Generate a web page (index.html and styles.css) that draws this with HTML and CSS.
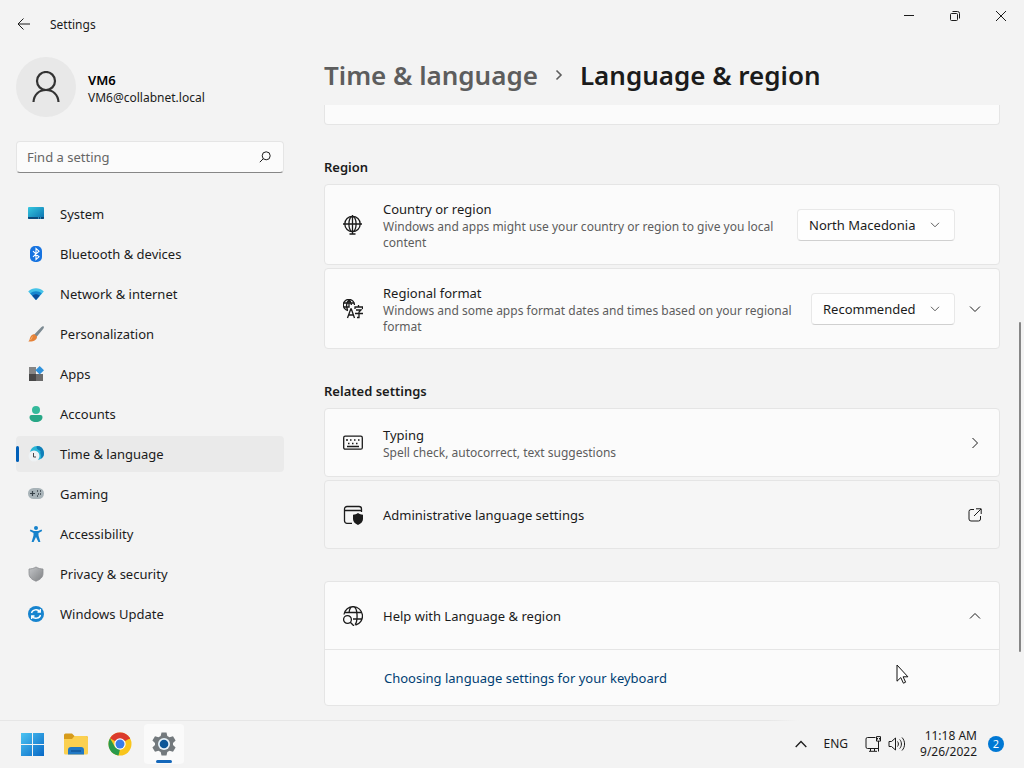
FILE: index.html
```html
<!DOCTYPE html>
<html lang="en">
<head>
    <meta charset="UTF-8">
    <meta name="viewport" content="width=device-width, initial-scale=1.0">
    <title>Settings</title>
    <link rel="stylesheet" href="styles.css">
</head>
<body>
    <div class="window">
        <header class="titlebar">
            <button class="back" aria-label="Back">
                <svg width="14" height="14" viewBox="0 0 14 14"><path d="M13 7H1.5M6.5 1.5L1 7l5.500 5.500" class="line"/></svg>
            </button>
            <span class="app-name">Settings</span>
            <div class="window-buttons">
                <button aria-label="Minimize"><svg width="12" height="12" viewBox="0 0 12 12"><path d="M1 5.500h10" class="line"/></svg></button>
                <button aria-label="Restore"><svg width="12" height="12" viewBox="0 0 12 12"><rect x="1.500" y="3.500" width="7" height="7" rx="1" class="line"/><path d="M3.500 1.500h5a2 2 0 0 1 2 2v5" class="line"/></svg></button>
                <button aria-label="Close"><svg width="12" height="12" viewBox="0 0 12 12"><path d="M1 1l10 10M11 1L1 11" class="line"/></svg></button>
            </div>
        </header>

        <div class="layout">
            <aside class="sidebar">
                <div class="profile">
                    <span class="avatar">
                        <svg width="28" height="32" viewBox="0 0 28 32"><circle cx="14" cy="10" r="9" class="person"/><path d="M1.500 31C2 23.500 7 19 14 19s12 4.500 12.500 12" class="person"/></svg>
                    </span>
                    <div>
                        <div class="user">VM6</div>
                        <div class="mail">VM6@collabnet.local</div>
                    </div>
                </div>
                <label class="search">
                    <input type="text" placeholder="Find a setting" aria-label="Find a setting">
                    <svg width="12" height="12" viewBox="0 0 12 12"><circle cx="7.200" cy="4.800" r="4" class="line"/><path d="M4.300 7.700L.8 11.200" class="line"/></svg>
                </label>
                <nav class="menu">
                    <a href="#">
                        <svg width="16" height="16" viewBox="0 0 16 16">
                            <defs><linearGradient id="screen" x1="0" y1="0" x2="1" y2="1"><stop offset="0" stop-color="#35c8e0"/><stop offset="1" stop-color="#0a6fae"/></linearGradient></defs>
                            <rect y="1" width="16" height="12" rx="1" fill="url(#screen)"/><path d="M0 11h16v1a1 1 0 0 1-1 1H1a1 1 0 0 1-1-1z" fill="#0b4a7c"/><path d="M10 12h1M12 12h1" stroke="#5ccdf0"/>
                        </svg>System</a>
                    <a href="#">
                        <svg width="16" height="16" viewBox="0 0 16 16"><rect x="2" y="0" width="12" height="16" rx="5" fill="#1673e0"/><path d="M5 5.200l6 5.600-3 2.700v-11l3 2.700-6 5.600" fill="none" stroke="#fff" stroke-width="1.100"/></svg>Bluetooth &amp; devices</a>
                    <a href="#">
                        <svg width="16" height="16" viewBox="0 0 16 16"><path d="M8 14L.2 5.500C4.500 1.200 11.500 1.200 15.800 5.500z" fill="#45c3e8"/><path d="M8 14L2.200 7.500c3.200-3.100 8.400-3.100 11.600 0z" fill="#1587cf"/><path d="M8 14L4.300 9.800c2.200-2 5.200-2 7.400 0z" fill="#0b4f9c"/></svg>Network &amp; internet</a>
                    <a href="#">
                        <svg width="16" height="16" viewBox="0 0 16 16"><path d="M15.500.3c1 .8.100 2-.6 3L8.500 11 6 8.700 13 1.500c.8-.8 1.800-1.700 2.500-1.200z" fill="#7c8a92"/><path d="M6.500 8.200L9 10.500c.2 3-2.500 5.300-8.700 5 1.700-1.500 1.200-3 2.200-4.800 1-1.900 2.700-2.500 4-2.500z" fill="#e58238"/><path d="M4.500 10.500l-2 3.500" stroke="#f7b26f"/></svg>Personalization</a>
                    <a href="#">
                        <svg width="16" height="16" viewBox="0 0 16 16"><path d="M1 1h7v7H1z" fill="#858585"/><path d="M1 8h7v7H1z" fill="#484848"/><path d="M8 8h7v7H8z" fill="#6b6b6b"/><path d="M11.700 0L16 4.300l-4.300 4.300-4.300-4.300z" fill="#2f92dc"/></svg>Apps</a>
                    <a href="#">
                        <svg width="16" height="16" viewBox="0 0 16 16"><circle cx="8" cy="4" r="4" fill="#34b99b"/><path d="M3.500 9h9a2 2 0 0 1 2 2c0 3.200-2.800 5-6.500 5s-6.500-1.800-6.500-5a2 2 0 0 1 2-2z" fill="#27a786"/></svg>Accounts</a>
                    <a href="#" class="active" aria-current="page">
                        <svg width="16" height="16" viewBox="0 0 16 16"><circle cx="9" cy="7" r="7" fill="#2ab6d6"/><path d="M9 0a7 7 0 0 1 3.500 13c2-4-1-5 0-7S7 4 9 0z" fill="#117eb8"/><circle cx="6" cy="10" r="5.500" fill="#eef2f4"/><path d="M5.500 7v4H8" fill="none" stroke="#454545"/></svg>Time &amp; language</a>
                    <a href="#">
                        <svg width="16" height="16" viewBox="0 0 16 16"><rect y="2" width="16" height="11" rx="5.500" fill="#a8b3b8"/><path d="M2 7.500h5M4.500 5v5" stroke="#374148" stroke-width="1.200"/><path d="M9 5h1M12 5h1M10 8h1M12 8h1M9 10h1" stroke="#374148" stroke-width="1.300"/></svg>Gaming</a>
                    <a href="#">
                        <svg width="16" height="16" viewBox="0 0 16 16"><circle cx="8" cy="2" r="2" fill="#1682cc"/><path d="M2.500 3.500L6 5h4l3.500-1.500.7 1.600L10.500 7v2.500L12.400 16h-2L8 11l-2.400 5h-2l1.900-6.500V7L1.800 5.100z" fill="#1682cc"/></svg>Accessibility</a>
                    <a href="#">
                        <svg width="16" height="16" viewBox="0 0 16 16">
                            <defs><linearGradient id="shield" x1="0" y1="0" x2="1" y2="1"><stop offset="0" stop-color="#c4c6c8"/><stop offset="1" stop-color="#7e8083"/></linearGradient></defs>
                            <path d="M8 1c2.200 1.300 4.500 2 7 2v4.500c0 3.500-2.500 6-7 7.700-4.500-1.700-7-4.200-7-7.700V3c2.500 0 4.800-.7 7-2z" fill="url(#shield)" stroke="#8b8d90" stroke-width=".8"/>
                        </svg>Privacy &amp; security</a>
                    <a href="#">
                        <svg width="16" height="16" viewBox="0 0 16 16"><circle cx="8" cy="8" r="8" fill="#1784cf"/><path d="M3.500 7C4.200 3.500 9.500 2.500 12 5.700M12.300 3v3H9.500M12.500 9c-.7 3.500-6 4.500-8.500 1.300M3.700 13v-3h2.800" fill="none" stroke="#fff" stroke-width="1.300"/></svg>Windows Update</a>
                </nav>
            </aside>

            <main class="content">
                <h1 class="breadcrumb">
                    <a href="#">Time &amp; language</a>
                    <svg width="8" height="12" viewBox="0 0 8 12"><path d="M1.500 1.500L6 6l-4.500 4.500" class="crumb-arrow"/></svg>
                    <span>Language &amp; region</span>
                </h1>
                <div class="scroll">
                    <div class="card card-cut"></div>

                    <h2>Region</h2>
                    <div class="card row">
                        <svg class="icon" width="20" height="20" viewBox="0 0 20 20"><circle cx="9.500" cy="9" r="7.700" class="bold"/><ellipse cx="9.500" cy="9" rx="3.600" ry="7.700" class="bold"/><path d="M0 9h19M9.500 0v19M6.500 19h6" class="bold"/></svg>
                        <div class="text">
                            <label class="title" for="country">Country or region</label>
                            <div class="hint">Windows and apps might use your country or region to give you local content</div>
                        </div>
                        <span class="dropdown">
                            <select id="country"><option>North Macedonia</option></select>
                            <svg width="10" height="6" viewBox="0 0 10 6"><path d="M1 .8l4 4 4-4" class="line"/></svg>
                        </span>
                        <span class="end"></span>
                    </div>
                    <div class="card row">
                        <svg class="icon" width="20" height="20" viewBox="0 0 20 20"><path d="M5 11.500A5.600 5.600 0 1 1 11.500 6" class="bold"/><path d="M4.500 11C3.200 7.500 3.500 3 6 .6c1.500 1.300 2.200 3 2.400 5.400M.7 4h10.500M.7 8h6M6 .5v8" class="bold"/><path d="M4.500 19L7.800 10h.5l3.200 9M5.500 16h5M12 10V8h7.500v2M15.500 6v2M13 11h5l-2 2v5.500h-2M12 14.500h8" class="bold"/></svg>
                        <div class="text">
                            <label class="title" for="format">Regional format</label>
                            <div class="hint">Windows and some apps format dates and times based on your regional format</div>
                        </div>
                        <span class="dropdown">
                            <select id="format"><option>Recommended</option></select>
                            <svg width="10" height="6" viewBox="0 0 10 6"><path d="M1 .8l4 4 4-4" class="line"/></svg>
                        </span>
                        <button class="end" aria-label="Show more"><svg width="12" height="8" viewBox="0 0 12 8"><path d="M1 1.500l5 5 5-5" class="line"/></svg></button>
                    </div>

                    <h2>Related settings</h2>
                    <a href="#" class="card row">
                        <svg class="icon" width="20" height="20" viewBox="0 0 20 20"><rect x=".7" y="3.200" width="18.600" height="13" rx="1.500" class="bold"/><path d="M3 7h2M7 7h1.500M11 7h1.500M15 7h1.500M5 10.500h1.500M9 10.500h1.500M13 10.500h1.500M4 13.500h12" class="bold"/></svg>
                        <div class="text">
                            <div class="title">Typing</div>
                            <div class="hint">Spell check, autocorrect, text suggestions</div>
                        </div>
                        <span class="end"><svg width="8" height="12" viewBox="0 0 8 12"><path d="M1.500 1l5 5-5 5" class="line"/></svg></span>
                    </a>
                    <a href="#" class="card row hover">
                        <svg class="icon" width="20" height="20" viewBox="0 0 20 20"><path d="M9 18.300H4a2.500 2.500 0 0 1-2.500-2.500V4A2.500 2.500 0 0 1 4 1.500h12A2.500 2.500 0 0 1 18.500 4v3M1.500 5.500h17" class="bold"/><path d="M15 8c1.700 1.200 3 1.600 5 1.800V14c0 2.600-1.800 4.500-5 6-3.200-1.500-5-3.400-5-6V9.800c2-.2 3.300-.6 5-1.800z" fill="#1b1b1b"/></svg>
                        <div class="text"><div class="title">Administrative language settings</div></div>
                        <span class="end"><svg width="14" height="14" viewBox="0 0 14 14"><path d="M6 1.500H3a2 2 0 0 0-2 2V11a2 2 0 0 0 2 2h7.500a2 2 0 0 0 2-2V8M8 .8h5.200V6M13 1L6 8" class="line"/></svg></span>
                    </a>

                    <section class="card help">
                        <button class="row help-head" aria-expanded="true">
                            <svg class="icon" width="20" height="20" viewBox="0 0 20 20"><path d="M1 8.500A9.300 9.300 0 1 1 12.500 19M1.500 6.500h17M10 13h8.500M6 6.500C6.500 3 8 .7 10 .7c5 0 5 14.500 2 18" class="bold"/><circle cx="4.500" cy="13.500" r="3.900" class="bold"/><path d="M7.300 16.300L11 20" class="bold"/></svg>
                            <span class="text title">Help with Language &amp; region</span>
                            <span class="end"><svg width="12" height="8" viewBox="0 0 12 8"><path d="M1 6.500l5-5 5 5" class="line"/></svg></span>
                        </button>
                        <div class="help-body"><a href="#">Choosing language settings for your keyboard</a></div>
                    </section>
                </div>
                <div class="scrollbar"></div>
                <svg class="cursor" width="13" height="20" viewBox="0 0 13 20"><path d="M1 1v16.200l3.800-3.600 2.600 5.600 2.200-1-2.500-5.400h4.800z" fill="#fff" stroke="#111"/></svg>
            </main>
        </div>
    </div>

    <footer class="taskbar">
        <div class="apps">
            <button aria-label="Start">
                <svg width="24" height="24" viewBox="0 0 24 24">
                    <defs><linearGradient id="win" gradientUnits="userSpaceOnUse" x1="0" y1="0" x2="24" y2="24"><stop offset="0" stop-color="#4fc8f4"/><stop offset="1" stop-color="#0868c6"/></linearGradient></defs>
                    <path d="M1 1h11v11H1zM13 1h11v11H13zM1 13h11v11H1zM13 13h11v11H13z" fill="url(#win)"/>
                </svg>
            </button>
            <button aria-label="File Explorer">
                <svg width="24" height="24" viewBox="0 0 24 24"><path d="M0 3a1.500 1.500 0 0 1 1.500-1.500H8L10.500 4H22a2 2 0 0 1 2 2v4H0z" fill="#d69b1c"/><path d="M0 7h8l2.500-3H22a2 2 0 0 1 2 2v15a1.500 1.500 0 0 1-1.500 1.500h-21A1.500 1.500 0 0 1 0 21z" fill="#fbd050"/><path d="M4 22.500V18a3 3 0 0 1 3-3h10a3 3 0 0 1 3 3v4.500z" fill="#2078c4"/><path d="M7 19h10" stroke="#145fa5" stroke-width="2"/></svg>
            </button>
            <button aria-label="Chrome">
                <svg width="24" height="24" viewBox="0 0 24 24"><circle cx="12" cy="12" r="11.500" fill="#f8c51c"/><path d="M12 12L2 6.300A11.500 11.500 0 0 1 22 6.300z" fill="#db3a2c"/><path d="M12 6.300h10M12 6.300v5.700" stroke="#db3a2c"/><path d="M2 6.300l5 8.600L12 17.500l-1.500 6A11.500 11.500 0 0 1 2 6.300z" fill="#299a4b"/><circle cx="12" cy="12" r="5.700" fill="#fff"/><circle cx="12" cy="12" r="4.500" fill="#397de8"/></svg>
            </button>
            <button aria-label="Settings" class="running">
                <svg width="24" height="24" viewBox="0 0 24 24"><path d="M9.500.5h5l.8 3.500 2.200 1.300L21 4.200l2.600 4.300L21 11v2l2.600 2.500-2.600 4.300-3.500-1.100-2.200 1.300-.8 3.500h-5L8.700 20l-2.200-1.300L3 19.800.4 15.500 3 13v-2L.4 8.500 3 4.200l3.500 1.100L8.700 4z" fill="#73797d"/><circle cx="12" cy="12" r="6" fill="#e8f3fa"/><circle cx="12" cy="12" r="4.300" fill="#0d5798"/></svg>
            </button>
        </div>
        <div class="tray">
            <button aria-label="Show hidden icons"><svg width="12" height="8" viewBox="0 0 12 8"><path d="M.7 7L6 1.500 11.300 7" class="bold"/></svg></button>
            <span class="lang">ENG</span>
            <button class="status" aria-label="Network and volume">
                <svg width="16" height="16" viewBox="0 0 16 16"><path d="M10.500 1.500h-8a1.500 1.500 0 0 0-1.500 1.500v8A1.500 1.500 0 0 0 2.500 12.500H13M5.500 12.500V15M9.500 12.500V15M4 15.300h8M11.500.6h4v4.500h-4zM13.500 5v10.500M12.500 2v1.500M14.500 2v1.500" class="line"/></svg>
                <svg width="18" height="16" viewBox="0 0 18 16"><path d="M1 5.500h2.500L7.500 2v12l-4-3.500H1zM9.500 5.500c1.200 1.400 1.200 3.600 0 5M11.700 3.500c2.300 2.500 2.300 6.500 0 9M14 1.500c3.400 3.500 3.400 9.500 0 13" class="line"/></svg>
            </button>
            <div class="clock"><span>11:18 AM</span><span>9/26/2022</span></div>
            <span class="badge">2</span>
        </div>
    </footer>
</body>
</html>
```
FILE: styles.css
```css
* {
    box-sizing: border-box;
}

body {
    margin: 0;
    min-height: 100vh;
    display: flex;
    flex-direction: column;
    background-color: #f3f3f3;
    color: #1b1b1b;
    font-family: "Noto Sans", "Open Sans", sans-serif;
    font-size: 13px;
    line-height: 20px;
}

button, input, select {
    font: inherit;
    color: inherit;
}

button {
    border: 0;
    padding: 0;
    background: none;
    display: flex;
    align-items: center;
    justify-content: center;
}

a {
    color: inherit;
    text-decoration: none;
}

svg {
    flex: none;
}

.line, .bold, .person, .crumb-arrow {
    fill: none;
    stroke: #1b1b1b;
    stroke-width: 1;
}

.bold {
    stroke-width: 1.3;
}

.person {
    stroke: #333;
    stroke-width: 2.2;
}

.crumb-arrow {
    stroke: #5d5d5d;
    stroke-width: 1.6;
}

.window {
    flex: 1;
    display: flex;
    flex-direction: column;
}

/* Title bar */
.titlebar {
    display: flex;
    height: 48px;
    padding-left: 16px;
    align-items: center;
}

.back {
    width: 16px;
    height: 16px;
}

.app-name {
    margin-left: 18px;
    padding-top: 2px;
    font-size: 12px;
}

.window-buttons {
    display: flex;
    margin-left: auto;
    align-self: flex-start;
}

.window-buttons button {
    width: 46px;
    height: 32px;
}

.layout {
    flex: 1;
    display: grid;
    grid-template-columns: 300px 1fr;
}

/* Left column */
.sidebar {
    padding: 9px 16px 0;
}

.profile {
    display: flex;
    align-items: center;
    gap: 12px;
    margin-bottom: 24px;
}

.avatar {
    display: flex;
    align-items: center;
    justify-content: center;
    width: 60px;
    height: 60px;
    border-radius: 50%;
    background-color: #e8e8e8;
}

.user {
    padding-top: 2px;
    font-weight: 600;
    color: #000;
}

.mail {
    font-size: 12px;
    line-height: 16px;
}

.search {
    display: flex;
    align-items: center;
    height: 32px;
    padding: 0 12px 0 10px;
    border: 1px solid #e5e5e5;
    border-bottom-color: #868686;
    border-radius: 4px;
    background-color: #fbfbfb;
}

.search input {
    flex: 1;
    min-width: 0;
    padding: 0;
    border: 0;
    outline: 0;
    background: none;
}

.search input::placeholder {
    color: #666;
    opacity: 1;
}

.menu {
    display: flex;
    flex-direction: column;
    gap: 4px;
    margin-top: 23px;
}

.menu a {
    display: flex;
    align-items: center;
    gap: 16px;
    height: 36px;
    padding-left: 12px;
    border-radius: 4px;
}

.menu .active {
    position: relative;
    background-color: #eaeaea;
}

.menu .active::before {
    content: "";
    position: absolute;
    left: 0;
    width: 3px;
    height: 16px;
    border-radius: 2px;
    background-color: #005fb8;
}

/* Right column */
.content {
    position: relative;
    padding: 7px 24px 14px;
}

.breadcrumb {
    display: flex;
    align-items: center;
    gap: 17px;
    margin: 0 0 10px;
    font-size: 26px;
    line-height: 40px;
    font-weight: 600;
    color: #1b1b1b;
}

.breadcrumb a {
    color: #5d5d5d;
}

h2 {
    margin: 32px 0 7px;
    font-size: 13px;
    font-weight: 600;
}

.card {
    border: 1px solid #e5e5e5;
    border-radius: 4px;
    background-color: #fbfbfb;
}

.card + .card {
    margin-top: 3px;
}

.card-cut {
    height: 20px;
    border-top: 0;
    border-radius: 0 0 4px 4px;
}

.row {
    display: flex;
    align-items: center;
    min-height: 69px;
    padding: 14px 16px 13px 18px;
}

.icon {
    margin-right: 20px;
}

.text {
    flex: 1;
    text-align: left;
}

.title {
    display: block;
}

.hint {
    font-size: 12px;
    line-height: 16px;
    color: #5d5d5d;
}

.dropdown {
    position: relative;
    margin-left: 16px;
}

.dropdown select {
    appearance: none;
    display: block;
    height: 32px;
    padding: 0 38px 0 11px;
    border: 1px solid #e8e8e8;
    border-bottom-color: #d0d0d0;
    border-radius: 4px;
    background-color: #fefefe;
}

.dropdown svg {
    position: absolute;
    top: 13px;
    right: 15px;
    pointer-events: none;
}

.dropdown .line {
    stroke: #5d5d5d;
}

.end {
    display: flex;
    justify-content: center;
    width: 16px;
    margin-left: 12px;
}

.hover {
    background-color: #f6f6f6;
}

.card.help {
    margin-top: 32px;
}

.help-head {
    width: 100%;
    min-height: 67px;
}

.help-body {
    padding: 18px 59px 17px;
    border-top: 1px solid #e5e5e5;
}

.help-body a {
    color: #003e73;
}

.scrollbar {
    position: absolute;
    top: 274px;
    right: 3px;
    width: 2px;
    height: 330px;
    border-radius: 1px;
    background-color: #868686;
}

.cursor {
    position: absolute;
    right: 115px;
    top: 616px;
}

/* Taskbar */
.taskbar {
    display: flex;
    align-items: center;
    justify-content: space-between;
    height: 48px;
    padding: 0 20px 0 12px;
    background: linear-gradient(to right, #e6e6e6 75%, #f3f3f3 78%) top / 100% 1px no-repeat #f3f3f3;
}

.apps {
    display: flex;
    gap: 4px;
}

.apps button {
    position: relative;
    width: 40px;
    height: 40px;
    border-radius: 4px;
}

.apps .running {
    background-color: #fafafa;
}

.running::after {
    content: "";
    position: absolute;
    bottom: 1px;
    left: 12px;
    width: 16px;
    height: 3px;
    border-radius: 2px;
    background-color: #1467ba;
}

.tray {
    display: flex;
    align-items: center;
    font-size: 12px;
    line-height: 16px;
}

.lang {
    margin: 0 17px 0 16px;
}

.status {
    gap: 7px;
}

.clock {
    display: flex;
    flex-direction: column;
    align-items: flex-end;
    margin: 0 11px 0 14px;
}

.badge {
    width: 16px;
    height: 16px;
    border-radius: 50%;
    background-color: #0078d4;
    color: #fff;
    font-size: 11px;
    text-align: center;
}
```
